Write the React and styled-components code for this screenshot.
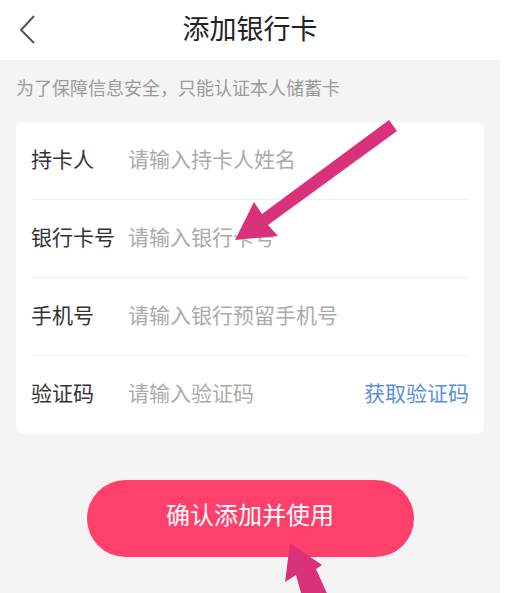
import styled, { createGlobalStyle } from "styled-components";

const GlobalStyle = createGlobalStyle`
  html, body {
    margin: 0;
    padding: 0;
    background: #ffffff;
  }
  body {
    font-family: "Noto Sans CJK SC", "Noto Sans", sans-serif;
  }
`;

const Page = styled.div`
  position: relative;
  width: 500px;
  min-height: 593px;
  background: #f4f4f4;
  overflow: hidden;
`;

const Header = styled.div`
  display: flex;
  align-items: center;
  justify-content: center;
  position: relative;
  height: 60px;
  background: #ffffff;
`;

const BackButton = styled.button`
  position: absolute;
  left: 14px;
  top: 8px;
  width: 30px;
  height: 40px;
  padding: 0;
  border: none;
  background: none;
  display: flex;
  align-items: center;
  justify-content: center;
`;

const Title = styled.h1`
  margin: 0 0 6px;
  font-size: 27px;
  font-weight: 400;
  color: #222222;
  line-height: 1;
`;

const Tip = styled.p`
  margin: 0;
  padding: 15px 16px 0;
  font-size: 18px;
  line-height: 24px;
  color: #9a9a9a;
`;

const Card = styled.div`
  margin: 23px 16px 0;
  padding: 0 15px;
  background: #ffffff;
  border-radius: 8px;
`;

const Row = styled.div`
  display: flex;
  align-items: center;
  box-sizing: border-box;
  height: 78px;
  padding-bottom: 6px;
  border-bottom: ${({ $last }) => ($last ? "none" : "1px solid #efefef")};
`;

const Label = styled.span`
  flex: 0 0 97px;
  font-size: 21px;
  color: #333333;
`;

const Field = styled.input`
  flex: 1;
  min-width: 0;
  border: none;
  outline: none;
  padding: 0;
  background: transparent;
  font-family: inherit;
  font-size: 21px;
  color: #333333;
  &::placeholder {
    color: #ababab;
  }
`;

const CodeLink = styled.span`
  font-size: 21px;
  color: #5a8fdf;
  white-space: nowrap;
`;

const ButtonWrap = styled.div`
  display: flex;
  justify-content: center;
  padding-top: 46px;
`;

const SubmitButton = styled.button`
  width: 327px;
  height: 77px;
  border: none;
  border-radius: 39px;
  background: #ff3f6c;
  color: #ffffff;
  font-family: inherit;
  font-size: 24px;
  padding: 0 0 10px;
`;

const Overlay = styled.svg`
  position: absolute;
  left: 0;
  top: 0;
  width: 500px;
  height: 593px;
  pointer-events: none;
`;

const fields = [
  { label: "持卡人", placeholder: "请输入持卡人姓名" },
  { label: "银行卡号", placeholder: "请输入银行卡号" },
  { label: "手机号", placeholder: "请输入银行预留手机号" },
  { label: "验证码", placeholder: "请输入验证码", code: true },
];

const App = () => {
  return (
    <Page>
      <GlobalStyle />
      <Header>
        <BackButton aria-label="返回">
          <svg width="20" height="32" viewBox="0 0 20 32">
            <path d="M15 4 L2 18 L15 31" fill="none" stroke="#555" strokeWidth="2" />
          </svg>
        </BackButton>
        <Title>添加银行卡</Title>
      </Header>
      <Tip>为了保障信息安全，只能认证本人储蓄卡</Tip>
      <Card>
        {fields.map((f, i) => (
          <Row key={f.label} $last={i === fields.length - 1}>
            <Label>{f.label}</Label>
            <Field placeholder={f.placeholder} />
            {f.code && <CodeLink>获取验证码</CodeLink>}
          </Row>
        ))}
      </Card>
      <ButtonWrap>
        <SubmitButton>确认添加并使用</SubmitButton>
      </ButtonWrap>
      <Overlay viewBox="0 0 500 593">
        <polygon
          fill="#d9327a"
          points="389,120 397,131 268,225 278,236 235,240 254,202 262,214"
        />
        <polygon
          fill="#d9327a"
          points="290,543 322,565 316,569 330,600 303,600 296,575 285,582"
        />
      </Overlay>
    </Page>
  );
};

export default App;
